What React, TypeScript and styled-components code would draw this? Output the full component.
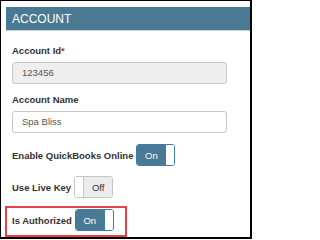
import React from "react";
import styled, { createGlobalStyle } from "styled-components";

const GlobalStyle = createGlobalStyle`
  html, body {
    margin: 0;
    padding: 0;
    background: #fff;
  }
  body {
    font-family: "Liberation Sans", Arial, sans-serif;
  }
`;

const Frame = styled.div`
  width: 252px;
  height: 239px;
  box-sizing: border-box;
  border-top: 1px solid #000;
  border-left: 1px solid #000;
  border-right: 2px solid #000;
  border-bottom: 2px solid #000;
  padding: 6px 0 0 5px;
  overflow: hidden;
`;

const Header = styled.div`
  height: 23px;
  line-height: 24px;
  padding-left: 6px;
  background: #4a7993;
  border-bottom: 1px solid #c8d2d9;
  color: #fff;
  font-size: 12px;
`;

const Body = styled.div`
  padding: 0 0 0 6px;
  display: flex;
  flex-direction: column;
  align-items: flex-start;
`;

const Label = styled.label<{ $top: number }>`
  margin-top: ${(p) => p.$top}px;
  margin-bottom: 5px;
  font-size: 9.5px;
  line-height: 12px;
  font-weight: 700;
  color: #333;
`;

const Required = styled.span`
  color: #e0242c;
`;

const Input = styled.div<{ $disabled?: boolean }>`
  width: 215px;
  height: 22px;
  box-sizing: border-box;
  border: 1px solid #c9c9c9;
  border-radius: 3px;
  background: ${(p) => (p.$disabled ? "#eee" : "#fff")};
  padding-left: 9px;
  font-size: 9.5px;
  line-height: 20px;
  color: #555;
`;

const Row = styled.div<{ $top: number }>`
  display: flex;
  align-items: center;
  gap: 3px;
  margin-top: ${(p) => p.$top}px;
`;

const RowText = styled.span`
  font-size: 9.5px;
  font-weight: 700;
  color: #333;
`;

const Highlight = styled.div`
  display: flex;
  align-items: center;
  gap: 3px;
  margin: 8px 0 0 -7px;
  padding: 1px 11px 4px 5px;
  border: 2px solid #e8414a;
`;

const Toggle = styled.div<{ $on: boolean }>`
  width: 39px;
  height: 22px;
  box-sizing: border-box;
  display: flex;
  flex-direction: ${(p) => (p.$on ? "row" : "row-reverse")};
  border: 1px solid ${(p) => (p.$on ? "#3f7cae" : "#c6c6c6")};
  border-radius: 3px;
  overflow: hidden;
`;

const ToggleFace = styled.span<{ $on: boolean }>`
  flex: 1;
  display: flex;
  align-items: center;
  justify-content: center;
  background: ${(p) => (p.$on ? "#4a7993" : "#ececec")};
  color: ${(p) => (p.$on ? "#fff" : "#333")};
  font-size: 9.5px;
`;

const Knob = styled.span<{ $on: boolean }>`
  width: 8px;
  background: #fff;
  border-${(p) => (p.$on ? "left" : "right")}: 1px solid
    ${(p) => (p.$on ? "#3f7cae" : "#c6c6c6")};
`;

function Switch({ on }: { on: boolean }) {
  return (
    <Toggle $on={on}>
      <ToggleFace $on={on}>{on ? "On" : "Off"}</ToggleFace>
      <Knob $on={on} />
    </Toggle>
  );
}

export default function App() {
  return (
    <Frame>
      <GlobalStyle />
      <Header>ACCOUNT</Header>
      <Body>
        <Label $top={14}>
          Account Id<Required>*</Required>
        </Label>
        <Input $disabled>123456</Input>
        <Label $top={10}>Account Name</Label>
        <Input>Spa Bliss</Input>
        <Row $top={11}>
          <RowText>Enable QuickBooks Online</RowText>
          <Switch on />
        </Row>
        <Row $top={10}>
          <RowText>Use Live Key</RowText>
          <Switch on={false} />
        </Row>
        <Highlight>
          <RowText>Is Authorized</RowText>
          <Switch on />
        </Highlight>
      </Body>
    </Frame>
  );
}
